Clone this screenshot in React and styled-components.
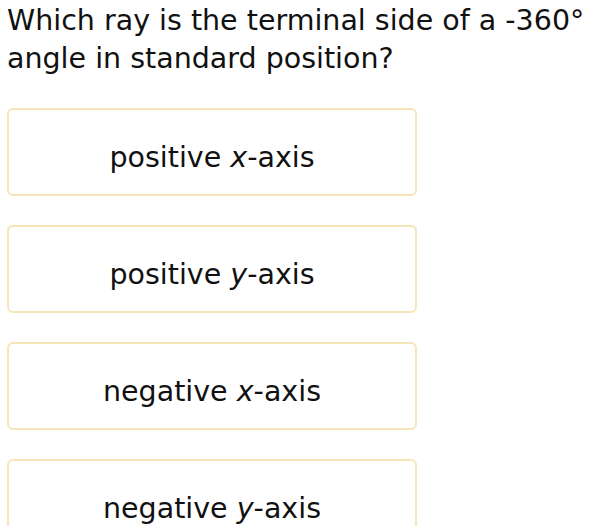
import React from 'react'
import styled, { createGlobalStyle } from 'styled-components';

const GlobalStyle = createGlobalStyle`
  body {
    margin: 0;
    background: #ffffff;
    font-family: "DejaVu Sans", Verdana, sans-serif;
    color: #111111;
  }
`

const Page = styled.div`
  padding: 0 7px;
  overflow: hidden;
  height: 526px;
`

const Question = styled.h1`
  margin: 2px 0 0;
  font-size: 28.5px;
  font-weight: 400;
  line-height: 38px;
  white-space: nowrap;
`

const Options = styled.div`
  margin-top: 30px;
  display: flex;
  flex-direction: column;
  gap: 29px;
  width: 410px;
`

const Option = styled.button`
  height: 88px;
  box-sizing: border-box;
  border: 2.5px solid #f5e5b8;
  border-radius: 6px;
  background: #ffffff;
  font-family: inherit;
  font-size: 28.5px;
  color: #111111;
  display: flex;
  align-items: center;
  justify-content: center;
  padding: 10px 0 0;
  flex-shrink: 0;
`

const Var = styled.i`
  font-style: italic;
`

const options = [
  ['positive', 'x'],
  ['positive', 'y'],
  ['negative', 'x'],
  ['negative', 'y'],
]

const App = () => {
  return (
    <Page>
      <GlobalStyle />
      <Question>
        Which ray is the terminal side of a -360°<br />
        angle in standard position?
      </Question>
      <Options>
        {options.map(([sign, axis]) => (
          <Option key={sign + axis}>
            {sign}&nbsp;<Var>{axis}</Var>-axis
          </Option>
        ))}
      </Options>
    </Page>
  );
}

export default App;
